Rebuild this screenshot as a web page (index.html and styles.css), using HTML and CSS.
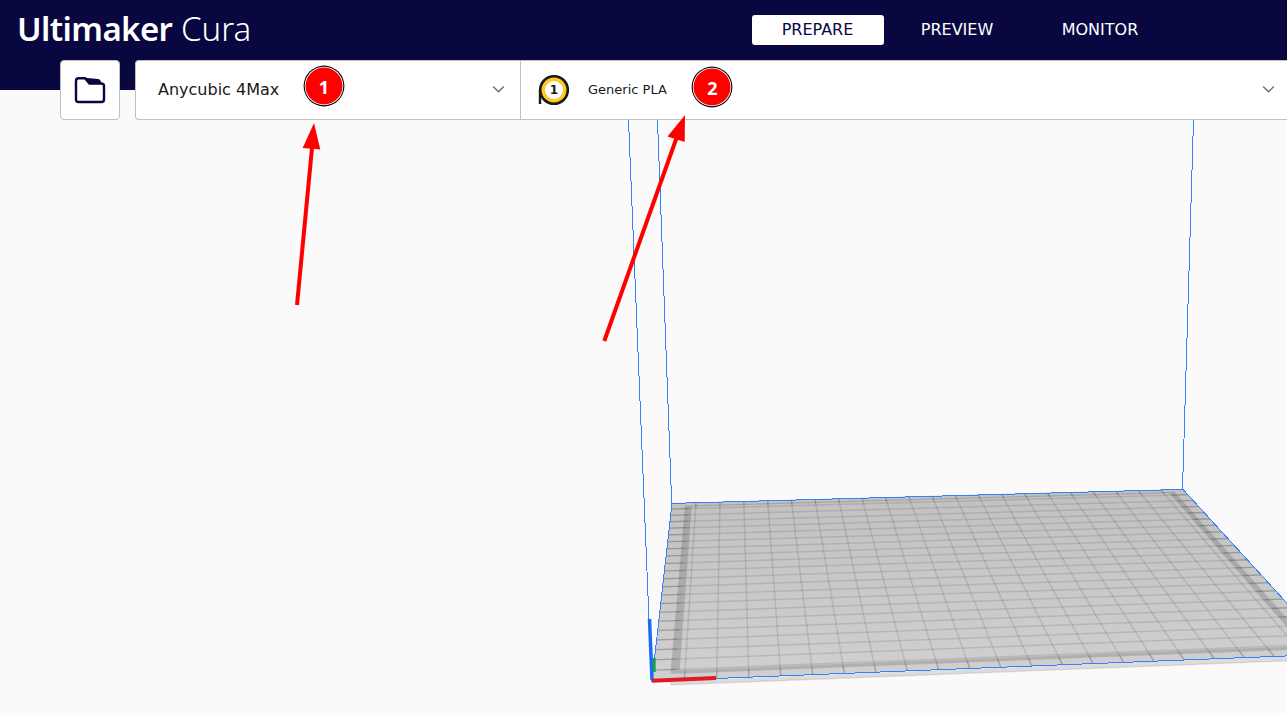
FILE: index.html
```html
<!DOCTYPE html>
<html lang="en">
<head>
<meta charset="utf-8">
<title>Ultimaker Cura</title>
<link rel="stylesheet" href="styles.css">
</head>
<body>
<main class="app">
  <header class="header">
    <div class="brand"><span class="brand-name">Ultimaker</span><span class="brand-product">Cura</span></div>
    <nav class="stages">
      <a class="stage stage-active">PREPARE</a>
      <a class="stage">PREVIEW</a>
      <a class="stage">MONITOR</a>
    </nav>
  </header>
  <div class="toolbar">
    <button class="open-file" aria-label="Open file">
      <svg width="32" height="28" viewBox="0 0 32 28"><path d="M5.5 2.2H11L15.500 7.500H27Q30 7.500 30 10V23.500Q30 26 27.500 26H4.500Q2 26 2 23.500V5Q2 2.200 4.500 2.200Z" fill="none" stroke="#08073f" stroke-width="2.4"/><path d="M10.500 1.700L24 3Q26.500 3 27.500 7.500H15.500Z" fill="#08073f"/></svg>
    </button>
    <div class="selectors">
      <div class="printer">
        <span class="printer-name">Anycubic 4Max</span>
        <svg class="chevron" width="13" height="9" viewBox="0 0 13 9"><path d="M1.200 1.500L6.500 6.800L11.800 1.500"/></svg>
      </div>
      <div class="material">
        <svg class="spool" width="32" height="32" viewBox="0 0 32 32"><path d="M2 16V30" stroke="#191919" stroke-width="2.400"/><circle cx="16" cy="16" r="13.800" fill="#ffc924" stroke="#191919" stroke-width="2.600"/><circle cx="16" cy="16" r="9" fill="#fff"/><text class="spool-number" x="16" y="20" text-anchor="middle">1</text></svg>
        <span class="material-name">Generic PLA</span>
        <svg class="chevron" width="13" height="9" viewBox="0 0 13 9"><path d="M1.200 1.500L6.500 6.800L11.800 1.500"/></svg>
      </div>
    </div>
  </div>
  <svg class="viewport" width="1287" height="593" viewBox="0 120 1287 593">
    <defs>
      <linearGradient id="plate" x1="0" y1="0" x2="0" y2="1"><stop offset="0" stop-color="#c1c1c1"/><stop offset="1" stop-color="#d0d0d0"/></linearGradient>
    </defs>
    <path d="M669 681L1287 656V661.500L671 685.500Z" fill="#dcdcdc"/>
    <path d="M671 684.500L1287 660.500" stroke="#d0d0d0" shape-rendering="crispEdges"/>
    <path d="M672 503L1183 489L1333.500 654.100L652 681Z" fill="url(#plate)"/>
    <g id="bed"></g>
    <g class="volume">
      <path d="M628.500 120L651.500 681"/>
      <path d="M657.500 120L671.700 503"/>
      <path d="M1193.500 120L1182.500 489"/>
      <path d="M672 503.400L1183 489.400L1333.500 654.100L652 681Z"/>
    </g>
    <path d="M649.500 619L652 680" stroke="#1a6af5" stroke-width="3.500"/>
    <path d="M654.200 658V672" stroke="#1fa045" stroke-width="3"/>
    <path d="M652 680.800L716 678" stroke="#e01b24" stroke-width="4"/>
  </svg>
  <svg class="callouts" width="1287" height="713" viewBox="0 0 1287 713">
    <path d="M297 305L312 148" stroke="#f00" stroke-width="4"/>
    <path d="M314 123L302.700 148L320.300 149.500Z" fill="#f00"/>
    <path d="M604.300 341L676.500 138" stroke="#f00" stroke-width="4"/>
    <path d="M685 115L667.500 136.500L684.700 142Z" fill="#f00"/>
    <g class="badge"><circle cx="324" cy="86" r="20.400" fill="#000"/><circle cx="324" cy="86" r="19.300" fill="#fff"/><circle cx="324" cy="86" r="18.500" fill="#f00"/><text x="324" y="94">1</text></g>
    <g class="badge"><circle cx="712" cy="87" r="20.400" fill="#000"/><circle cx="712" cy="87" r="19.300" fill="#fff"/><circle cx="712" cy="87" r="18.500" fill="#f00"/><text x="712.500" y="95">2</text></g>
  </svg>
</main>
<script src="bed.js"></script>
</body>
</html>
```
FILE: styles.css
```css
body { margin: 0; background: #fafafa; }
.app { position: relative; width: 1287px; height: 713px; overflow: hidden; font-family: "DejaVu Sans", sans-serif; color: #191919; }
.header { box-sizing: border-box; height: 90px; padding: 0 124px 30px 17px; background: #08073f; color: #fff; display: flex; justify-content: space-between; align-items: center; }
.brand { display: flex; gap: 8px; font-family: "Noto Sans", sans-serif; font-size: 33px; line-height: 60px; height: 62px; }
.brand-name { font-weight: 600; width: 156px; letter-spacing: -0.6px; }
.brand-product { font-weight: 300; }
.stages { display: flex; }
.stage { box-sizing: border-box; height: 30px; width: 126px; margin-right: 17px; border-radius: 3px; font-size: 16px; line-height: 30px; text-align: center; }
.stage:last-child { margin-right: 0; }
.stage-active { width: 132px; margin-right: 10.5px; background: #fff; color: #08073f; }
.toolbar { display: flex; gap: 15px; margin: -30px 0 0 60px; height: 60px; }
.open-file { box-sizing: border-box; width: 60px; height: 60px; padding: 0; display: flex; align-items: center; justify-content: center; background: #fff; border: 1px solid #c0c0c0; border-radius: 4px; }
.selectors { box-sizing: border-box; flex: 1; display: flex; background: #fff; border: 1px solid #c0c0c0; border-right: 0; border-radius: 4px 0 0 4px; }
.printer, .material { display: flex; align-items: center; box-sizing: border-box; }
.printer { width: 385px; padding: 0 15px 0 22px; border-right: 1px solid #c0c0c0; }
.printer-name { font-size: 16px; padding-bottom: 2px; }
.material { flex: 1; padding: 0 12px 0 17px; }
.material-name { font-size: 13px; margin-left: 18px; padding-bottom: 2px; }
.chevron { margin-left: auto; padding-bottom: 1px; fill: none; stroke: #6b6b6b; stroke-width: 1.3; }
.spool-number { font: bold 12px "DejaVu Sans", sans-serif; fill: #191919; }
.viewport { display: block; fill: none; }
.volume { stroke: #3282ff; stroke-width: 1; shape-rendering: crispEdges; }
.grid-line { stroke: #000; stroke-opacity: .105; stroke-width: 1.5; }
.margin-line { stroke: #000; stroke-opacity: .14; stroke-width: 1.2; }
.border-band { fill: #000; fill-opacity: .15; }
.callouts { position: absolute; left: 0; top: 0; }
.badge text { font: 700 18px "Noto Sans", sans-serif; fill: #fff; text-anchor: middle; }
```
FILE: bed.js
```js
// Projects a 22 x 22 cm build plate onto the viewport.
const SIZE = 22;
const [a, b, c, d] = [[672, 503], [1183, 489], [1333.5, 654.1], [652, 681]];
const sx = a[0] - b[0] + c[0] - d[0];
const sy = a[1] - b[1] + c[1] - d[1];
const dx1 = b[0] - c[0], dx2 = d[0] - c[0], dy1 = b[1] - c[1], dy2 = d[1] - c[1];
const det = dx1 * dy2 - dx2 * dy1;
const g = (sx * dy2 - dx2 * sy) / det;
const h = (dx1 * sy - sx * dy1) / det;

function project(col, row) {
  const u = col / SIZE, v = row / SIZE, w = g * u + h * v + 1;
  const x = ((b[0] - a[0] + g * b[0]) * u + (d[0] - a[0] + h * d[0]) * v + a[0]) / w;
  const y = ((b[1] - a[1] + g * b[1]) * u + (d[1] - a[1] + h * d[1]) * v + a[1]) / w;
  return x.toFixed(2) + " " + y.toFixed(2);
}

function draw(points, className, close) {
  const path = document.createElementNS("http://www.w3.org/2000/svg", "path");
  path.setAttribute("d", "M" + points.map(p => project(p[0], p[1])).join("L") + (close ? "Z" : ""));
  path.setAttribute("class", className);
  document.getElementById("bed").appendChild(path);
}

for (let i = 1; i < SIZE; i++) {
  draw([[i, 0], [i, SIZE]], "grid-line");
  draw([[0, i], [SIZE, i]], "grid-line");
  draw([[i, 0], [i, 0.8]], "margin-line");
  draw([[i, 21.3], [i, SIZE]], "margin-line");
  draw([[0, i], [0.7, i]], "margin-line");
  draw([[21.3, i], [SIZE, i]], "margin-line");
}
draw([[0.55, 0.5], [0.83, 0.5], [0.83, 21.4], [0.55, 21.4]], "border-band", true);
draw([[21.25, 0.4], [21.52, 0.4], [21.52, 21.4], [21.25, 21.4]], "border-band", true);
draw([[0.83, 0.45], [21.25, 0.45], [21.25, 0.65], [0.83, 0.65]], "border-band", true);
draw([[0.83, 21.1], [21.25, 21.1], [21.25, 21.42], [0.83, 21.42]], "border-band", true);
```
